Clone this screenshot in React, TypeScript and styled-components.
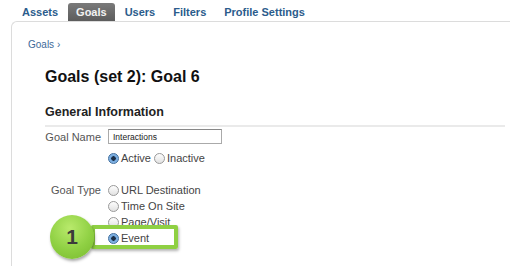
import React from "react";
import styled, { createGlobalStyle } from "styled-components";

const Global = createGlobalStyle`
  html, body {
    margin: 0;
    padding: 0;
    background: #fff;
    font-family: "Liberation Sans", Arial, sans-serif;
  }
  #root {
    width: 510px;
    height: 266px;
    overflow: hidden;
  }
`;

const tabs = ["Assets", "Goals", "Users", "Filters", "Profile Settings"];
const goalTypes = ["URL Destination", "Time On Site", "Page/Visit", "Event"];

function Radio({ label, checked }: { label: string; checked?: boolean }) {
  return (
    <RadioLabel>
      <RadioDot $checked={checked} />
      {label}
    </RadioLabel>
  );
}

export default function App() {
  return (
    <>
      <Global />
      <Page>
        <TabBar>
          {tabs.map((t) => (
            <Tab key={t} $active={t === "Goals"}>
              {t}
            </Tab>
          ))}
        </TabBar>
        <Panel>
          <Crumb>Goals ›</Crumb>
          <Content>
            <Title>Goals (set 2): Goal 6</Title>
            <Section>General Information</Section>
            <Form>
              <Label>Goal Name</Label>
              <TextBox>Interactions</TextBox>
              <span />
              <RadioRow>
                <Radio label="Active" checked />
                <Radio label="Inactive" />
              </RadioRow>
              <Label $top>Goal Type</Label>
              <RadioList>
                {goalTypes.map((g) => (
                  <Radio key={g} label={g} checked={g === "Event"} />
                ))}
              </RadioList>
            </Form>
          </Content>
          <Callout>
            <Badge>1</Badge>
            <Highlight />
          </Callout>
        </Panel>
      </Page>
    </>
  );
}

const Page = styled.div`
  width: 510px;
  height: 266px;
  position: relative;
`;

const TabBar = styled.div`
  display: flex;
  gap: 2px;
  padding: 3px 0 0 14px;
  height: 18px;
  align-items: stretch;
`;

const Tab = styled.div<{ $active?: boolean }>`
  display: flex;
  align-items: center;
  padding: 0 8px;
  font-size: 11px;
  font-weight: bold;
  color: ${(p) => (p.$active ? "#f2f2f2" : "#2b5c8c")};
  background: ${(p) => (p.$active ? "linear-gradient(#7a7a7a, #5c5c5c)" : "transparent")};
  border-radius: 3px 3px 0 0;
`;

const Panel = styled.div`
  position: relative;
  margin-left: 11px;
  height: 245px;
  border-top: 1px solid #dcdcdc;
  border-left: 1px solid #dcdcdc;
  border-top-left-radius: 6px;
  box-sizing: border-box;
`;

const Crumb = styled.div`
  padding: 17px 0 0 16px;
  font-size: 10px;
  color: #3d6a99;
`;

const Content = styled.div`
  padding: 18px 0 0 33px;
`;

const Title = styled.div`
  font-size: 16px;
  font-weight: bold;
  color: #111;
`;

const Section = styled.div`
  margin-top: 19px;
  font-size: 12.5px;
  font-weight: bold;
  color: #222;
  padding-bottom: 6px;
  border-bottom: 2px solid #eaeaea;
  margin-right: 5px;
`;

const Form = styled.div`
  display: grid;
  grid-template-columns: 56px auto;
  column-gap: 7px;
  row-gap: 5px;
  margin-top: 2px;
  align-items: center;
`;

const Label = styled.div<{ $top?: boolean }>`
  font-size: 11px;
  color: #555;
  white-space: nowrap;
  text-align: right;
  align-self: ${(p) => (p.$top ? "start" : "center")};
  margin-top: ${(p) => (p.$top ? "14px" : "0")};
`;

const TextBox = styled.div`
  width: 114px;
  height: 15px;
  box-sizing: border-box;
  border: 1px solid #aaa;
  border-top-color: #888;
  font-size: 8.5px;
  padding: 2px 4px;
  color: #222;
`;

const RadioRow = styled.div`
  display: flex;
  gap: 3px;
  margin-top: 2px;
`;

const RadioList = styled.div`
  display: flex;
  flex-direction: column;
  gap: 2px;
  margin-top: 13px;
`;

const RadioLabel = styled.label`
  display: flex;
  align-items: center;
  gap: 1px;
  font-size: 11px;
  color: #444;
  height: 14px;
`;

const RadioDot = styled.span<{ $checked?: boolean }>`
  display: inline-block;
  width: 9px;
  height: 9px;
  border-radius: 50%;
  border: 1px solid ${(p) => (p.$checked ? "#3d6d9e" : "#999")};
  background: ${(p) =>
    p.$checked
      ? "radial-gradient(circle, #1c2f47 0 2px, #6fa6dc 2.5px, #9cc4ee 100%)"
      : "linear-gradient(#fdfdfd, #e2e2e2)"};
  margin-right: 1px;
`;

const Callout = styled.div`
  position: absolute;
  left: 38px;
  top: 193px;
  display: flex;
  align-items: center;
`;

const Badge = styled.div`
  position: relative;
  z-index: 2;
  width: 44px;
  height: 44px;
  border-radius: 50%;
  background: radial-gradient(circle at 45% 30%, #b9ea6c, #8fd043 55%, #78b92e);
  box-shadow: 1px 2px 3px rgba(0, 0, 0, 0.35);
  display: flex;
  align-items: center;
  justify-content: center;
  font-size: 21px;
  font-weight: bold;
  color: #3b3b3b;
`;

const Highlight = styled.div`
  margin-left: -3px;
  width: 87px;
  height: 24px;
  box-sizing: border-box;
  border: 4px solid #8fd043;
  border-radius: 2px;
  box-shadow: 1px 2px 3px rgba(0, 0, 0, 0.3);
`;
